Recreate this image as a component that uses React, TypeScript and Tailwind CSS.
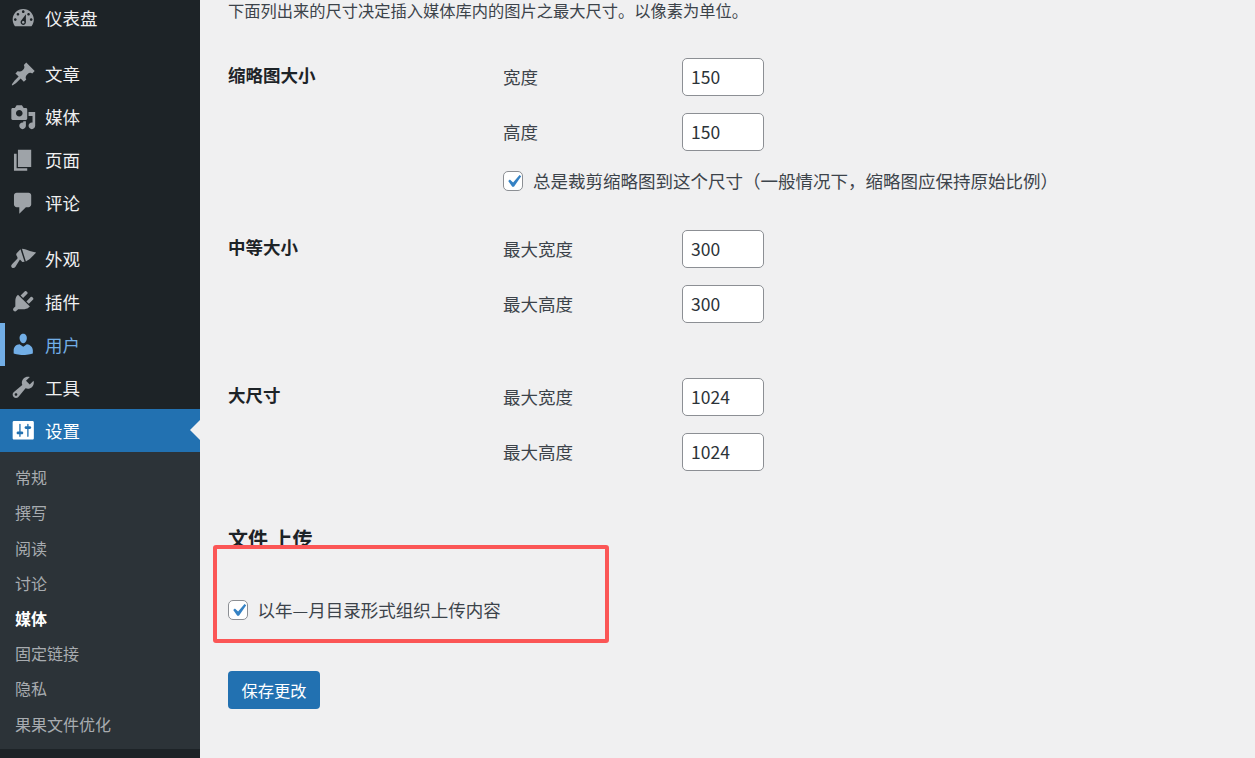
import React from "react";

const font = { fontFamily: '"Noto Sans CJK SC", "Noto Sans", sans-serif' };

const paths: Record<string, string> = {
  dashboard: "M3.76 16h12.48c1.1-1.37 1.76-3.11 1.76-5 0-4.42-3.58-8-8-8s-8 3.58-8 8c0 1.89.66 3.63 1.76 5zM10 4c.55 0 1 .45 1 1s-.45 1-1 1-1-.45-1-1 .45-1 1-1zM6 6c.55 0 1 .45 1 1s-.45 1-1 1-1-.45-1-1 .45-1 1-1zm8 0c.55 0 1 .45 1 1s-.45 1-1 1-1-.45-1-1 .45-1 1-1zm-5.37 5.55L12 7v6c0 1.1-.9 2-2 2s-2-.9-2-2c0-.57.24-1.08.63-1.45zM4 10c.55 0 1 .45 1 1s-.45 1-1 1-1-.45-1-1 .45-1 1-1zm12 0c.55 0 1 .45 1 1s-.45 1-1 1-1-.45-1-1 .45-1 1-1zm-5 3c0-.55-.45-1-1-1s-1 .45-1 1 .45 1 1 1 1-.45 1-1z",
  post: "M10.44 3.02l1.82-1.82 6.36 6.35-1.83 1.82c-1.05-.68-2.48-.57-3.41.36l-.75.75c-.92.93-1.04 2.35-.35 3.41l-1.83 1.82-2.41-2.41-2.8 2.79c-.42.42-3.38 2.71-3.8 2.29s1.86-3.39 2.28-3.81l2.79-2.79L4.1 9.36l1.83-1.82c1.05.69 2.48.57 3.4-.36l.75-.75c.93-.92 1.05-2.35.36-3.41z",
  media: "M13 11V4c0-.55-.45-1-1-1h-1.67L9 1H5L3.67 3H2c-.55 0-1 .45-1 1v7c0 .55.45 1 1 1h10c.55 0 1-.45 1-1zM7 4.5c1.38 0 2.5 1.12 2.5 2.5S8.38 9.5 7 9.5 4.5 8.38 4.5 7 5.62 4.5 7 4.5zM14 6h5v10.5c0 1.38-1.12 2.5-2.5 2.5S14 17.88 14 16.5s1.12-2.5 2.5-2.5c.17 0 .34.02.5.05V9h-3V6zm-4 8.05V13h2v3.5c0 1.38-1.12 2.5-2.5 2.5S7 17.88 7 16.5 8.12 14 9.5 14c.17 0 .34.02.5.05z",
  page: "M6 15V2h10v13H6zm-1 1h8v2H3V5h2v11z",
  comments: "M5 2h9c1.1 0 2 .9 2 2v7c0 1.1-.9 2-2 2h-2l-5 5v-5H5c-1.1 0-2-.9-2-2V4c0-1.1.9-2 2-2z",
  appearance: "M9 2.9C11 2.9 13 4 15 4.6c1.5.4 3.3.6 4.8 1.1-1.3 1.5-2.8 2.8-4.3 4.3-1 1-2.5 1.5-3.5 2.5zM7.9 3.2L11 12.6l-1.7.3-1.8-1.9-3.5 5.6c-1 1.4-3 1-3.1-.8 0-1 2.1-2.8 4.6-5.5.5-.6 0-1.3-.6-2.3-.3-.6-.3-1.2.1-1.8z",
  plugins: "M13.11 4.36L9.87 7.6 8 5.73l3.24-3.24c.35-.34 1.05-.2 1.56.32.52.51.66 1.21.31 1.55zm-8 1.77l.91-1.12 9.01 9.01-1.19.84c-.71.71-2.63 1.16-3.82 1.16H6.14L4.9 17.26c-.59.59-1.54.59-2.12 0-.59-.58-.59-1.53 0-2.12l1.24-1.24v-3.88c0-1.13.4-3.19 1.09-3.89zm7.26 3.97l3.24-3.24c.34-.35 1.04-.21 1.55.31.52.51.66 1.21.31 1.55l-3.24 3.25z",
  users: "M10 9.25c-2.27 0-2.73-3.44-2.73-3.44C7 4.02 7.82 2 9.97 2c2.16 0 2.98 2.02 2.71 3.81 0 0-.41 3.44-2.68 3.44zm0 2.57L12.72 10c2.39 0 4.52 2.33 4.52 4.53v2.49s-3.65 1.13-7.24 1.13c-3.65 0-7.24-1.13-7.24-1.13v-2.49c0-2.25 1.94-4.48 4.47-4.48z",
  tools: "M16.68 9.77c-1.34 1.34-3.3 1.67-4.95.99l-5.41 6.52c-.99.99-2.59.99-3.58 0s-.99-2.59 0-3.57l6.52-5.42c-.68-1.65-.35-3.61.99-4.95 1.28-1.28 3.12-1.62 4.72-1.06l-2.89 2.89 2.82 2.82 2.86-2.87c.53 1.58.18 3.39-1.08 4.65zM3.81 16.21c.4.39 1.04.39 1.43 0 .4-.4.4-1.04 0-1.43-.39-.4-1.03-.4-1.43 0-.39.39-.39 1.03 0 1.43z",
  settings: "M18 16V4c0-.55-.45-1-1-1H3c-.55 0-1 .45-1 1v12c0 .55.45 1 1 1h14c.55 0 1-.45 1-1zM8 11h1c.55 0 1 .45 1 1s-.45 1-1 1H8v1.5c0 .28-.22.5-.5.5s-.5-.22-.5-.5V13H6c-.55 0-1-.45-1-1s.45-1 1-1h1V5.5c0-.28.22-.5.5-.5s.5.22.5.5V11zm5-2h-1c-.55 0-1-.45-1-1s.45-1 1-1h1V5.5c0-.28.22-.5.5-.5s.5.22.5.5V7h1c.55 0 1 .45 1 1s-.45 1-1 1h-1v5.5c0 .28-.22.5-.5.5s-.5-.22-.5-.5V9z",
};

function MenuRow({ icon, label, state }: { icon: string; label: string; state?: "hover" | "current" }) {
  const rowColor =
    state === "current"
      ? "bg-[#2271b1] text-white"
      : state === "hover"
        ? "text-[#72aee6]"
        : "text-[#f0f0f1]";
  const iconColor =
    state === "current" ? "text-white" : state === "hover" ? "text-[#72aee6]" : "text-[#9ea3a8]";
  return (
    <div className={`relative flex h-[42.9px] items-center ${rowColor}`}>
      {state === "hover" && <div className="absolute left-0 top-0 h-full w-[5px] bg-[#72aee6]" />}
      <div className={`ml-[9.5px] w-[26.5px] ${iconColor}`}>
        <svg viewBox="0 0 20 20" className="block h-[26.5px] w-[26.5px]" fill="currentColor">
          <path d={paths[icon]} />
        </svg>
      </div>
      <span className="ml-[9px] text-[17.5px] leading-none">{label}</span>
      {state === "current" && (
        <div className="absolute right-0 top-1/2 h-0 w-0 -translate-y-1/2 border-y-[10px] border-r-[10px] border-y-transparent border-r-[#f0f0f1]" />
      )}
    </div>
  );
}

function SubRow({ label, active }: { label: string; active?: boolean }) {
  return (
    <div
      className={`flex h-[35.2px] items-center pl-[15px] text-[16px] leading-none ${
        active ? "font-bold text-white" : "text-[#a8acb0]"
      }`}
    >
      {label}
    </div>
  );
}

function Field({ label, value }: { label: string; value: string }) {
  return (
    <div className="flex h-[38px] items-center">
      <label className="w-[179px] text-[17.5px] leading-none text-[#3c434a]">{label}</label>
      <input
        readOnly
        value={value}
        className="h-[38px] w-[82px] rounded-[5px] border border-[#8c8f94] bg-white px-[8px] pb-[2px] text-[17.5px] text-[#2c3338] outline-none"
      />
    </div>
  );
}

function Check() {
  return (
    <span className="flex h-[20px] w-[20px] shrink-0 items-center justify-center rounded-[5px] border border-[#8c8f94] bg-white">
      <svg viewBox="0 0 20 20" className="h-[25px] w-[25px] shrink-0">
        <path d="M14.83 4.89l1.34.94-5.81 8.38H9.02L5.78 9.67l1.34-1.25 2.57 2.4z" fill="#3582c4" />
      </svg>
    </span>
  );
}

function Group({ title, children, className }: { title: string; children: React.ReactNode; className: string }) {
  return (
    <section className={`flex ${className}`}>
      <h3 className="w-[275px] pt-[6px] text-[17.5px] font-bold leading-[22px] text-[#1d2327]">{title}</h3>
      <div className="flex flex-col gap-[17px]">{children}</div>
    </section>
  );
}

export default function App() {
  return (
    <div style={font} className="relative flex h-[758px] w-[1255px] overflow-hidden bg-[#f0f0f1]">
      <aside className="flex h-full w-[200px] shrink-0 flex-col bg-[#1d2327]">
        <div className="-mt-[3.5px]">
          <MenuRow icon="dashboard" label="仪表盘" />
        </div>
        <div className="mt-[13.3px]">
          <MenuRow icon="post" label="文章" />
          <MenuRow icon="media" label="媒体" />
          <MenuRow icon="page" label="页面" />
          <MenuRow icon="comments" label="评论" />
        </div>
        <div className="mt-[13px]">
          <MenuRow icon="appearance" label="外观" />
          <MenuRow icon="plugins" label="插件" />
          <MenuRow icon="users" label="用户" state="hover" />
          <MenuRow icon="tools" label="工具" />
          <MenuRow icon="settings" label="设置" state="current" />
        </div>
        <div className="bg-[#2c3338] pb-[8px] pt-[8px]">
          <SubRow label="常规" />
          <SubRow label="撰写" />
          <SubRow label="阅读" />
          <SubRow label="讨论" />
          <SubRow label="媒体" active />
          <SubRow label="固定链接" />
          <SubRow label="隐私" />
          <SubRow label="果果文件优化" />
        </div>
      </aside>
      <main className="relative flex-1 pl-[28px]">
        <p className="whitespace-nowrap text-[16.25px] leading-[20px] text-[#3c434a]">
          下面列出来的尺寸决定插入媒体库内的图片之最大尺寸。以像素为单位。
        </p>
        <Group title="缩略图大小" className="mt-[38px]">
          <Field label="宽度" value="150" />
          <Field label="高度" value="150" />
          <div className="-mt-[4px] flex h-[22px] translate-y-[6px] items-center gap-[10px]">
            <Check />
            <span className="text-[17.5px] leading-none text-[#3c434a]">
              总是裁剪缩略图到这个尺寸（一般情况下，缩略图应保持原始比例）
            </span>
          </div>
        </Group>
        <Group title="中等大小" className="mt-[44px]">
          <Field label="最大宽度" value="300" />
          <Field label="最大高度" value="300" />
        </Group>
        <Group title="大尺寸" className="mt-[55px]">
          <Field label="最大宽度" value="1024" />
          <Field label="最大高度" value="1024" />
        </Group>
        <h2 className="mt-[54px] text-[20px] font-bold leading-[28px] text-[#1d2327]">文件 上传</h2>
        <div className="absolute left-[13px] top-[545px] h-[98px] w-[396px] rounded-[3px] border-[4px] border-[#fb5656] bg-[#f0f0f1]" />
        <div className="relative mt-[46px] flex h-[22px] items-center gap-[9.5px]">
          <Check />
          <span className="text-[17.5px] leading-none text-[#3c434a]">以年—月目录形式组织上传内容</span>
        </div>
        <button className="mt-[50px] h-[38px] w-[92px] rounded-[4px] bg-[#2271b1] text-[16.25px] text-white">
          保存更改
        </button>
      </main>
    </div>
  );
}
